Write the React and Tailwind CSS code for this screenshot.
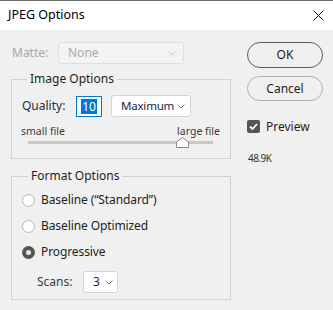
import React from 'react';

const font = { fontFamily: '"Noto Sans", "Open Sans", sans-serif' };

// petit chevron des listes déroulantes
const Chevron = ({ color = '#7a7a7a' }) => (
  <svg width="8" height="5" viewBox="0 0 8 5" className="shrink-0">
    <polyline points="0.5,0.5 4,4 7.5,0.5" fill="none" stroke={color} strokeWidth="1" />
  </svg>
);

const Radio = ({ checked, label }) => (
  <div className="flex h-[26px] items-center">
    {checked ? (
      <span className="ml-[10px] flex h-[13px] w-[13px] items-center justify-center rounded-full bg-[#555555]">
        <span className="h-[5px] w-[5px] rounded-full bg-[#e6e6e6]" />
      </span>
    ) : (
      <span className="ml-[10px] h-[13px] w-[13px] rounded-full border border-[#b5b5b5] bg-white" />
    )}
    <span className="ml-[6px] text-[12px] tracking-[-0.1px] text-[#1e1e1e]">{label}</span>
  </div>
);

export default function App() {
  return (
    <div
      className="h-[310px] w-[333px] overflow-hidden border-t border-[#6b6b6b] bg-[#f0f0f0] leading-none"
      style={font}
    >
      <div className="flex h-[29px] items-center justify-between bg-white pl-[8px] pr-[9px]">
        <span className="text-[12.5px] text-black">JPEG Options</span>
        <svg width="11" height="11" viewBox="0 0 11 11">
          <path d="M0.5 0.5 L10.5 10.5 M10.5 0.5 L0.5 10.5" stroke="#111" strokeWidth="1" />
        </svg>
      </div>

      <div className="flex">
        <div className="ml-[11px] w-[220px]">
          <div className="mt-[12px] flex h-[22px] items-center">
            <span className="ml-[1px] w-[46px] text-[12px] text-[#a6a6a6]">Matte:</span>
            <div className="flex h-[22px] w-[126px] items-center justify-between rounded-[3px] border border-[#dedede] bg-[#f3f3f3] pl-[9px] pr-[7px]">
              <span className="text-[12px] text-[#a9a9a9]">None</span>
              <Chevron color="#c2c2c2" />
            </div>
          </div>

          <fieldset className="mt-[7px] h-[88px] border border-[#d2d2d2]">
            <legend className="ml-[15px] h-[16px] px-[3px] text-[12px] leading-[16px] text-[#1e1e1e]">
              Image Options
            </legend>
            <div className="mt-[8px] flex h-[22px] items-center">
              <span className="ml-[10px] w-[54px] text-[12px] text-[#2b2b3c]">Quality:</span>
              <div className="flex h-[21px] w-[26px] items-center justify-center border border-[#0078d7] bg-white">
                <span className="bg-[#0078d7] px-[1px] text-[12px] leading-[15px] text-white">10</span>
              </div>
              <div className="ml-[9px] flex h-[22px] w-[80px] items-center justify-between rounded-[3px] border border-[#d4d4d4] bg-white pl-[9px] pr-[5px]">
                <span className="text-[11.5px] tracking-[-0.2px] text-[#1e1e3c]">Maximum</span>
                <Chevron />
              </div>
            </div>
            <div className="mt-[9px] flex justify-between pl-[9px] pr-[10px] text-[10.5px] text-[#3c3c3c]">
              <span>small file</span>
              <span>large file</span>
            </div>
            <div className="relative ml-[16px] mt-[4px] h-[3px] w-[185px] bg-[#c8c8c8]">
              <svg width="13" height="11" viewBox="0 0 13 11" className="absolute left-[148px] top-[-4px]">
                <path d="M0.5 10.5 L0.5 5 L6.5 0.5 L12.5 5 L12.5 10.5 Z" fill="#ffffff" stroke="#8a8a8a" strokeWidth="1" />
              </svg>
            </div>
          </fieldset>

          <fieldset className="mt-[9px] h-[132px] border border-[#d2d2d2]">
            <legend className="ml-[16px] h-[16px] px-[3px] text-[12px] leading-[16px] text-[#1e1e1e]">
              Format Options
            </legend>
            <div className="mt-[3px]">
              <Radio label={'Baseline (\u201cStandard\u201d)'} />
              <Radio label="Baseline Optimized" />
              <Radio checked label="Progressive" />
            </div>
            <div className="mt-[6px] flex h-[22px] items-center">
              <span className="ml-[25px] w-[46px] text-[12px] text-[#3c3c3c]">Scans:</span>
              <div className="flex h-[22px] w-[35px] items-center justify-between rounded-[3px] border border-[#d4d4d4] bg-white pl-[9px] pr-[4px]">
                <span className="text-[12px] text-[#1e1e3c]">3</span>
                <Chevron />
              </div>
            </div>
          </fieldset>
        </div>

        <div className="ml-[16px] w-[77px]">
          <button className="mt-[12px] flex h-[26px] w-[76px] items-center justify-center rounded-full border border-[#5c5c5c] bg-[#f0f0f0] text-[12px] text-[#1e1e1e]">
            OK
          </button>
          <button className="mt-[8px] flex h-[25px] w-[76px] items-center justify-center rounded-full border border-[#b0b0b0] bg-[#f0f0f0] text-[12px] text-[#1e1e1e]">
            Cancel
          </button>
          <div className="mt-[19px] flex items-center">
            <span className="flex h-[13px] w-[13px] items-center justify-center rounded-[2px] bg-[#555555]">
              <svg width="9" height="7" viewBox="0 0 9 7">
                <polyline points="1,3.5 3.5,6 8,1" fill="none" stroke="#ffffff" strokeWidth="1.8" />
              </svg>
            </span>
            <span className="ml-[6px] text-[12px] text-[#1e1e1e]">Preview</span>
          </div>
          <div className="ml-[1px] mt-[20px] text-[10px] tracking-[-0.5px] text-[#333]">48.9K</div>
        </div>
      </div>
    </div>
  );
}
